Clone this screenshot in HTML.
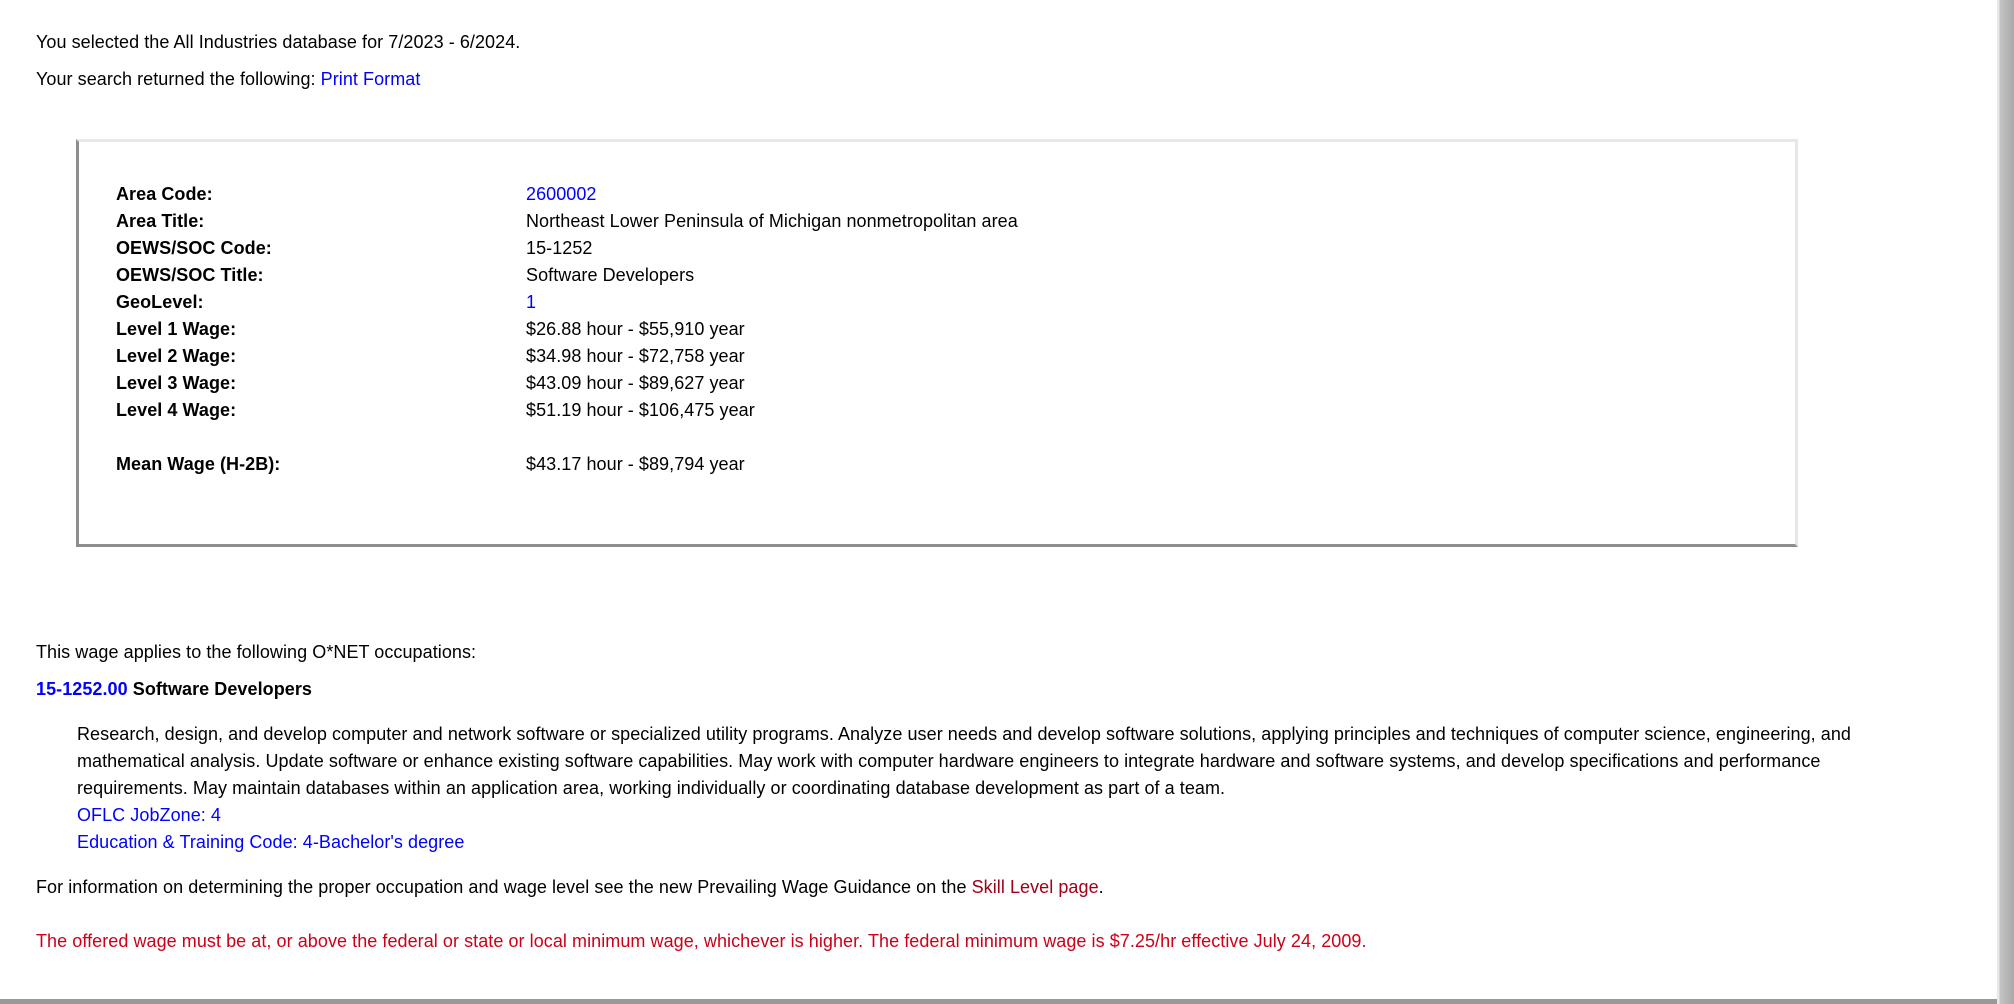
<!DOCTYPE html>
<html><head><meta charset="utf-8"><style>
html,body{margin:0;padding:0;background:#fff;width:2014px;height:1004px;overflow:hidden;position:relative;font-family:"Liberation Sans",Arial,sans-serif;font-size:18px;color:#000;letter-spacing:0.06px}
.l{position:absolute;white-space:nowrap;line-height:27px}
a{color:#0000ff;text-decoration:none}
b{font-weight:bold}
.box{position:absolute;left:76px;top:139px;width:1716px;height:402px;border-style:solid;border-width:3px;border-color:#e8e8e8 #e8e8e8 #8e8e8e #8e8e8e}
.sb{position:absolute;left:1997px;top:0;width:17px;height:1004px;background:linear-gradient(90deg,#e8e8e8 0,#e8e8e8 2px,#c4c4c4 3px,#a8a8a8 17px)}
.bb{position:absolute;left:0;top:999px;width:1997px;height:5px;background:#999}
</style></head><body>
<div class="l" style="left:36px;top:29px">You selected the All Industries database for 7/2023 - 6/2024.</div>
<div class="l" style="left:36px;top:66px">Your search returned the following: <a>Print Format</a></div>
<div class="box"></div>
<div class="l" style="left:116px;top:181px;line-height:27px">
<b>Area Code:</b><br><b>Area Title:</b><br><b>OEWS/SOC Code:</b><br><b>OEWS/SOC Title:</b><br><b>GeoLevel:</b><br><b>Level 1 Wage:</b><br><b>Level 2 Wage:</b><br><b>Level 3 Wage:</b><br><b>Level 4 Wage:</b><br><br><b>Mean Wage (H-2B):</b></div>
<div class="l" style="left:526px;top:181px;line-height:27px">
<a>2600002</a><br>Northeast Lower Peninsula of Michigan nonmetropolitan area<br>15-1252<br>Software Developers<br><a>1</a><br>$26.88 hour - $55,910 year<br>$34.98 hour - $72,758 year<br>$43.09 hour - $89,627 year<br>$51.19 hour - $106,475 year<br><br>$43.17 hour - $89,794 year</div>
<div class="l" style="left:36px;top:639px">This wage applies to the following O*NET occupations:</div>
<div class="l" style="left:36px;top:676px"><a><b>15-1252.00</b></a> <b>Software Developers</b></div>
<div class="l" style="left:77px;top:721px">Research, design, and develop computer and network software or specialized utility programs. Analyze user needs and develop software solutions, applying principles and techniques of computer science, engineering, and<br>mathematical analysis. Update software or enhance existing software capabilities. May work with computer hardware engineers to integrate hardware and software systems, and develop specifications and performance<br>requirements. May maintain databases within an application area, working individually or coordinating database development as part of a team.<br><a>OFLC JobZone: 4</a><br><a>Education &amp; Training Code: 4-Bachelor's degree</a></div>
<div class="l" style="left:36px;top:874px">For information on determining the proper occupation and wage level see the new Prevailing Wage Guidance on the <span style="color:#a00018">Skill Level page</span>.</div>
<div class="l" style="left:36px;top:928px;color:#cc0018">The offered wage must be at, or above the federal or state or local minimum wage, whichever is higher. The federal minimum wage is $7.25/hr effective July 24, 2009.</div>
<div class="bb"></div>
<div class="sb"></div>
</body></html>
